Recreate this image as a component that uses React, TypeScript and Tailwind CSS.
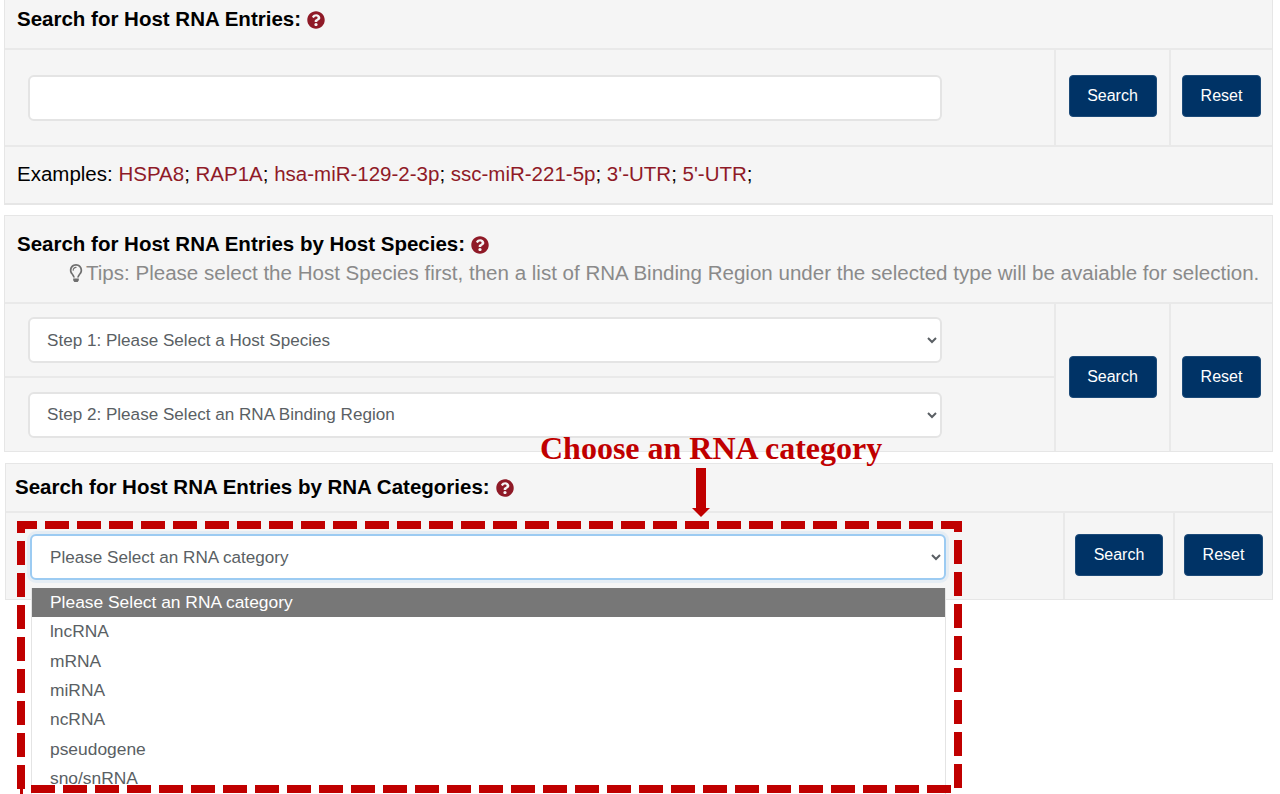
import { FaQuestionCircle, FaRegLightbulb } from "react-icons/fa";

const sans = "font-['Liberation_Sans',Arial,sans-serif]";

function ActionCells({ w1, w2, shift }: { w1: string; w2: string; shift: string }) {
  return (
    <>
      <div className={`${w1} shrink-0 border-l-2 border-[#e9e9e9] flex items-center justify-center`}>
        <button className={`${shift} w-[88px] h-[42px] rounded-[4px] bg-[#003366] border border-[#1c4a78] text-white text-[16px]`}>Search</button>
      </div>
      <div className={`${w2} shrink-0 border-l-2 border-[#e9e9e9] flex items-center justify-center`}>
        <button className={`${shift} w-[79px] h-[42px] rounded-[4px] bg-[#003366] border border-[#1c4a78] text-white text-[16px]`}>Reset</button>
      </div>
    </>
  );
}

function Field({ label }: { label: string }) {
  return (
    <select className="w-[914px] h-[46px] pl-[13px] pr-1 bg-white border-2 border-[#e4e4e4] rounded-[6px] text-[#5a5f64] text-[17.1px]">
      <option>{label}</option>
    </select>
  );
}

const top = [13, 45, 77, 109, 141, 173, 205, 237, 269, 301, 333, 365, 397, 429, 461, 493, 525, 557, 589, 621, 653, 685, 717, 749, 781, 813, 845, 877, 909, 941];
const side = [540, 572, 604, 636, 668, 700, 732, 764];
const bottom = [31, 63, 95, 127, 159, 191, 223, 255, 287, 319, 351, 383, 415, 447, 479, 511, 543, 575, 607, 639, 671, 703, 735, 767, 799, 831, 863, 895, 927];

function Overlay() {
  return (
    <svg className="absolute left-0 top-0 pointer-events-none" width="1280" height="794" viewBox="0 0 1280 794">
      <g fill="#c00000">
        {top.map((x) => (
          <rect key={x} x={Math.max(x, 17)} y={521} width={x === 941 ? 21 : x === 13 ? 20 : 24} height={8} />
        ))}
        <rect x={17} y={521} width={8} height={12} />
        <rect x={954} y={521} width={8} height={11} />
        {side.map((y) => (
          <g key={y}>
            <rect x={17} y={y + 1} width={8} height={24} />
            <rect x={954} y={y} width={8} height={24} />
          </g>
        ))}
        <rect x={20} y={789} width={3} height={5} />
        {bottom.map((x) => (
          <rect key={x} x={x} y={785} width={24} height={8} />
        ))}
        <rect x={696} y={468} width={10} height={41} />
        <polygon points="692,508 710,508 701,517" />
      </g>
    </svg>
  );
}

export default function App() {
  return (
    <div className={`relative h-[794px] w-[1280px] overflow-hidden bg-white text-black ${sans}`}>
      {/* Panel 1 */}
      <section className="ml-[4px] w-[1269px] h-[205px] bg-[#f5f5f5] border-x border-b-2 border-[#e6e6e6]">
        <div className="h-[50px] pl-[12px] flex items-center gap-[6px] pb-[9px] border-b-2 border-[#e9e9e9]">
          <h2 className="text-[20.5px] font-bold">Search for Host RNA Entries:</h2>
          <FaQuestionCircle className="text-[#8f1a27] text-[18px]" />
        </div>
        <div className="h-[97px] flex border-b-2 border-[#e9e9e9]">
          <div className="flex-1 pl-[23px] flex items-center">
            <input className="w-[914px] h-[46px] bg-white border-2 border-[#e4e4e4] rounded-[6px]" />
          </div>
          <ActionCells w1="w-[115px]" w2="w-[103px]" shift="mb-[3px]" />
        </div>
        <p className="pl-[12px] pt-[12px] text-[20.5px] leading-[30px]">
          Examples: <span className="text-[#8f1a27]">HSPA8</span>; <span className="text-[#8f1a27]">RAP1A</span>; <span className="text-[#8f1a27]">hsa-miR-129-2-3p</span>; <span className="text-[#8f1a27]">ssc-miR-221-5p</span>; <span className="text-[#8f1a27]">3'-UTR</span>; <span className="text-[#8f1a27]">5'-UTR</span>;
        </p>
      </section>

      {/* Panel 2 */}
      <section className="mt-[10px] ml-[4px] w-[1269px] h-[237px] bg-[#f5f5f5] border border-[#e6e6e6]">
        <div className="h-[88px] pl-[12px] pt-[15px] border-b-2 border-[#e9e9e9]">
          <div className="flex items-center gap-[6px] h-[27px]">
            <h2 className="text-[20.5px] font-bold">Search for Host RNA Entries by Host Species:</h2>
            <FaQuestionCircle className="text-[#8f1a27] text-[18px]" />
          </div>
          <p className="pl-[50px] flex items-center text-[20.55px] leading-[30px] text-[#8a8a8a] whitespace-nowrap">
            <FaRegLightbulb className="text-[#6f6f6f] text-[18px] mr-[1px]" />
            Tips: Please select the Host Species first, then a list of RNA Binding Region under the selected type will be avaiable for selection.
          </p>
        </div>
        <div className="h-[147px] flex">
          <div className="flex-1 flex flex-col">
            <div className="h-[74px] pl-[23px] flex items-center border-b-2 border-[#e9e9e9]">
              <Field label="Step 1: Please Select a Host Species" />
            </div>
            <div className="h-[73px] pl-[23px] flex items-center">
              <Field label="Step 2: Please Select an RNA Binding Region" />
            </div>
          </div>
          <ActionCells w1="w-[115px]" w2="w-[103px]" shift="mb-[1px]" />
        </div>
      </section>

      {/* Panel 3 */}
      <section className="mt-[11px] ml-[5px] w-[1268px] h-[137px] bg-[#f5f5f5] border border-[#e6e6e6]">
        <div className="h-[49px] pl-[9px] flex items-center gap-[6px] border-b-2 border-[#e9e9e9]">
          <h2 className="text-[20.5px] font-bold">Search for Host RNA Entries by RNA Categories:</h2>
          <FaQuestionCircle className="text-[#8f1a27] text-[18px]" />
        </div>
        <div className="h-[86px] flex">
          <div className="flex-1 pl-[24px] pt-[2px] flex items-center">
            <select className="w-[916px] h-[46px] pl-[14px] pr-1 bg-white border-2 border-[#9ccbf2] rounded-[6px] text-[#5a5f64] text-[17.1px] shadow-[0_0_0_3px_rgba(140,195,240,0.15)]">
              <option>Please Select an RNA category</option>
            </select>
          </div>
          <ActionCells w1="w-[110px]" w2="w-[99px]" shift="mb-[3px]" />
        </div>
      </section>

      {/* Open dropdown */}
      <ul className="absolute left-[31px] top-[588px] w-[915px] h-[206px] overflow-hidden bg-white border-x border-[#e4e4e4] text-[#5a5f64] text-[17.4px]">
        <li className="h-[29px] pl-[18px] bg-[#777777] text-white flex items-center">Please Select an RNA category</li>
        {["lncRNA", "mRNA", "miRNA", "ncRNA", "pseudogene", "sno/snRNA"].map((t) => (
          <li key={t} className="h-[29.4px] pl-[18px] pb-[1px] flex items-center">{t}</li>
        ))}
      </ul>

      <Overlay />

      <div className="absolute left-[540px] top-[428px] font-['Liberation_Serif',serif] font-bold text-[#c00000] text-[32px] leading-[40px] whitespace-nowrap">
        Choose an RNA category
      </div>
    </div>
  );
}
